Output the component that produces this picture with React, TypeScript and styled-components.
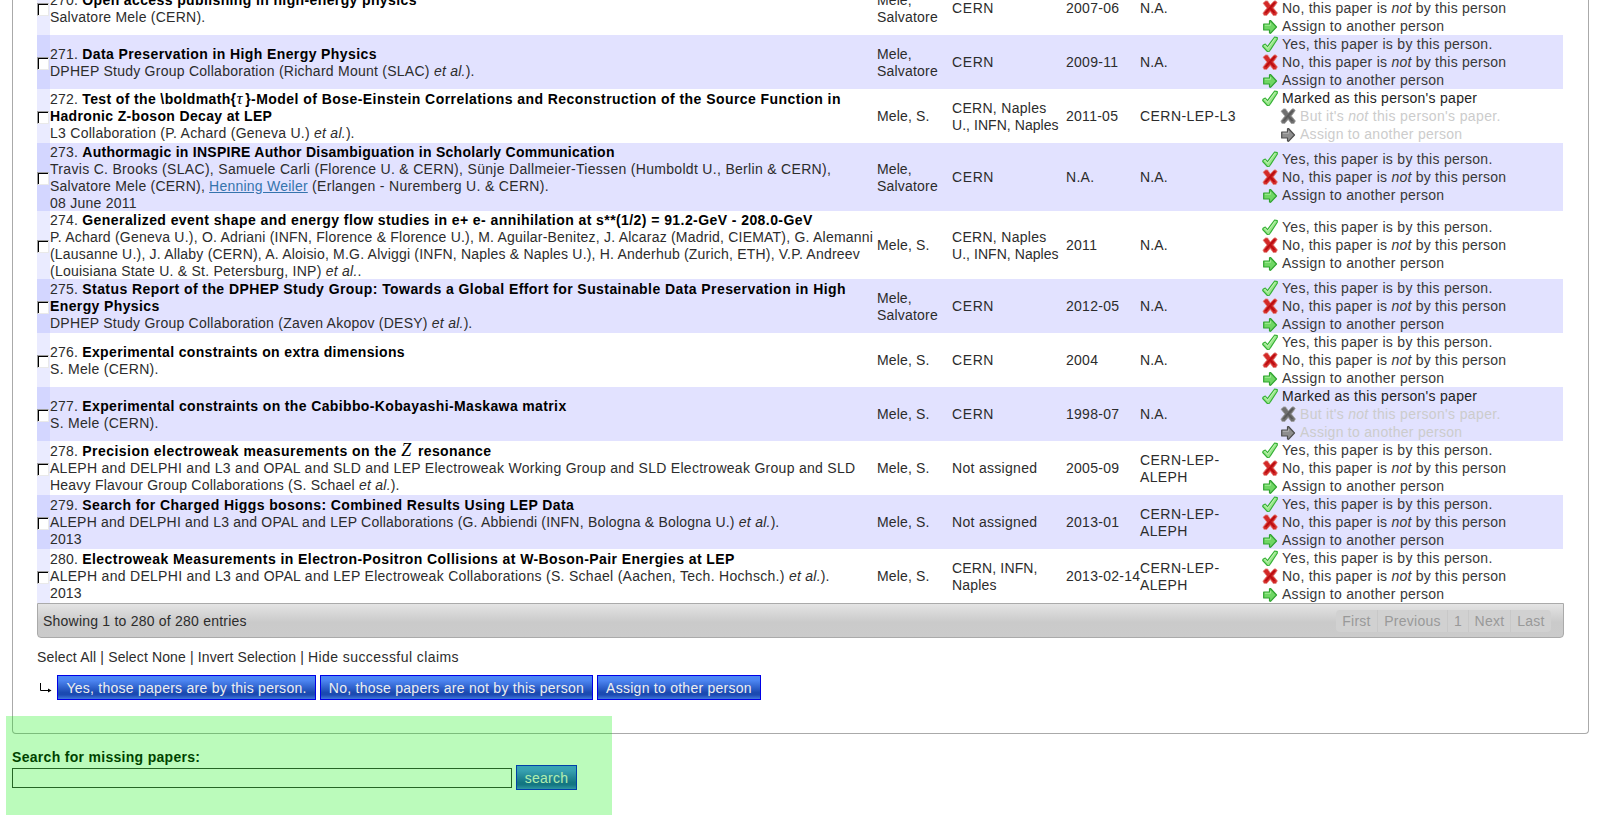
import React from 'react';
import styled, { createGlobalStyle, css } from 'styled-components';

const GlobalStyle = createGlobalStyle`
  html, body { margin: 0; padding: 0; background: #fff; overflow: hidden; }
  body { font: 14px/17px "Liberation Sans", Arial, sans-serif; color: #2c2c2c; }
  *, *::before, *::after { box-sizing: border-box; }
`;

const Page = styled.main`
  position: relative;
  width: 1601px;
  height: 836px;
  overflow: hidden;
`;

const Panel = styled.section`
  width: 1577px;
  height: 753px;
  margin: -19px 0 0 12px;
  padding: 0 24px;
  border: 1px solid #aaa;
  border-top: 0;
  border-radius: 0 0 4px 4px;
`;

const Row = styled.div<{ $shaded: boolean; $height: number }>`
  display: grid;
  grid-template-columns: 13px 827px 75px 114px 74px 122px 1fr;
  grid-template-rows: 100%;
  width: 1526px;
  height: ${p => p.$height}px;
  background: ${p => (p.$shaded ? '#e2e2ff' : '#fff')};
`;

const CheckCell = styled.div<{ $shaded: boolean }>`
  display: flex;
  align-items: center;
  padding-top: 2px;
  background: ${p => (p.$shaded ? '#d3d6ff' : '#eaebff')};
`;

const Checkbox = styled.span`
  width: 12px;
  height: 13px;
  background: #fff;
  border: 1px solid;
  border-color: #9c9c9c #e9e9e9 #e9e9e9 #9c9c9c;
  box-shadow: inset 1px 1px 0 #000;
`;

const Cell = styled.div`
  display: flex;
  flex-direction: column;
  justify-content: center;
  padding-top: 1px;
  white-space: pre;
`;

const Line = styled.div`
  flex: none;
  height: 17px;
`;

const Txt = styled.span<{ $ls?: number }>`
  letter-spacing: ${p => p.$ls ?? 0}px;
`;

const Num = styled(Txt)`
  display: inline-block;
  width: 32.3px;
`;

const Title = styled(Txt)`
  font-weight: bold;
  color: #000;
`;

const AuthorLink = styled(Txt)`
  color: #3574ad;
  text-decoration: underline;
`;

const Em = styled.i`
  letter-spacing: 0.25px;
`;

const MathGlyph = styled.span<{ $size: number; $width: number }>`
  display: inline-block;
  width: ${p => p.$width}px;
  font: italic ${p => p.$size}px/14px "Liberation Serif", serif;
  color: #000;
`;

const Actions = styled.div`
  display: flex;
  flex-direction: column;
  justify-content: center;
`;

const Action = styled.div<{ $muted?: boolean; $strong?: boolean }>`
  display: flex;
  align-items: center;
  gap: 4px;
  height: 18px;
  line-height: 18px;
  white-space: pre;
  color: ${p => (p.$muted ? '#ccc' : p.$strong ? '#222' : '#383838')};
  ${p => p.$muted && css`padding-left: 18px;`}
`;

const Icon = styled.svg`
  flex: none;
  width: 16px;
  height: 16px;
`;

const CheckIcon = () => (
  <Icon viewBox="0 0 16 16">
    <path d="M1 9.200L3.300 8l2.200 2.600L12.600 1l2.700.6v1.600L7.400 15.300l-2 .2L.7 10.500z" fill="#98e68a" stroke="#35b035" strokeWidth="1.1" strokeLinejoin="round" />
    <path d="M2.300 9.800l.9-.4 2.300 2.900 7.600-10" fill="none" stroke="#c4f6b8" strokeWidth=".9" />
  </Icon>
);

const CrossIcon = ({ muted }: { muted?: boolean }) => (
  <Icon viewBox="0 0 16 16">
    <path
      d="M1 3.200L3.600.9h2l2.700 4L12 .9h2l1.200 1.800-3.800 5.200 4 5-1.300 2.500-2.700.3-3.200-4.300-3.400 4.100-2.900-.2-1-2.200 4-5z"
      fill={muted ? '#707070' : '#d42a28'}
      stroke={muted ? '#a2a2a2' : '#e58b86'}
      strokeWidth=".8"
      strokeLinejoin="round"
    />
    <path d="M3.500 13L8 7.800 13 2.600M8 7.800L12.500 13" fill="none" stroke={muted ? '#595959' : '#b80d12'} strokeWidth="1.7" />
  </Icon>
);

const ArrowIcon = ({ muted }: { muted?: boolean }) => (
  <Icon viewBox="0 0 16 16">
    <path
      d="M1.700 6h5.800V2.800l1-.3L14.500 9l-6 6.300-1-.4V12H1.700z"
      fill={muted ? '#8e8e8e' : '#6fd664'}
      stroke={muted ? '#4e4e4e' : '#2fa32f'}
      strokeWidth="1.2"
      strokeLinejoin="round"
    />
    <path d="M2.800 7.300h5.800V5" fill="none" stroke={muted ? '#b5b5b5' : '#a8ee9a'} strokeWidth=".9" />
  </Icon>
);

const PendingActions = () => (
  <Actions>
    <Action><CheckIcon /><Txt $ls={0.28}>Yes, this paper is by this person.</Txt></Action>
    <Action><CrossIcon /><span><Txt $ls={0.24}>No, this paper is </Txt><Em>not</Em><Txt $ls={0.24}> by this person</Txt></span></Action>
    <Action><ArrowIcon /><Txt $ls={0.28}>Assign to another person</Txt></Action>
  </Actions>
);

const ClaimedActions = () => (
  <Actions>
    <Action $strong><CheckIcon /><Txt $ls={0.28}>Marked as this person's paper</Txt></Action>
    <Action $muted><CrossIcon muted /><span><Txt $ls={0.3}>But it's </Txt><Em>not</Em><Txt $ls={0.36}> this person's paper.</Txt></span></Action>
    <Action $muted><ArrowIcon muted /><Txt $ls={0.28}>Assign to another person</Txt></Action>
  </Actions>
);

type Fragment = [string, number];
const Lines = ({ items }: { items: Fragment[] }) => (
  <Cell>
    {items.map(([text, spacing], i) => (
      <Line key={i}><Txt $ls={spacing}>{text}</Txt></Line>
    ))}
  </Cell>
);

const SALVATORE: Fragment[] = [['Mele,', 0.1], ['Salvatore', 0.2]];
const MELE_S: Fragment[] = [['Mele, S.', 0.15]];
const CERN: Fragment[] = [['CERN', 0.6]];
const NAPLES: Fragment[] = [['CERN, Naples', 0.3], ['U., INFN, Naples', 0.05]];
const UNASSIGNED: Fragment[] = [['Not assigned', 0.3]];
const NA: Fragment[] = [['N.A.', 0.1]];
const ALEPH: Fragment[] = [['CERN-LEP-', 0.45], ['ALEPH', 0.35]];

interface Paper {
  id: number;
  lines: React.ReactNode[];
  name: Fragment[];
  affiliation: Fragment[];
  date: string;
  experiment: Fragment[];
  claimed?: boolean;
  height?: number;
}

const EtAl = ({ end = ').' }: { end?: string }) => (<><Em>et al.</Em>{end}</>);

const papers: Paper[] = [
  {
    id: 270,
    lines: [<Title $ls={0.38}>Open access publishing in high-energy physics</Title>, <Txt $ls={0.24}>Salvatore Mele (CERN).</Txt>],
    name: SALVATORE, affiliation: CERN, date: '2007-06', experiment: NA,
  },
  {
    id: 271,
    lines: [
      <Title $ls={0.4}>Data Preservation in High Energy Physics</Title>,
      <><Txt $ls={0.255}>DPHEP Study Group Collaboration (Richard Mount (SLAC) </Txt><EtAl /></>,
    ],
    name: SALVATORE, affiliation: CERN, date: '2009-11', experiment: NA,
  },
  {
    id: 272,
    lines: [
      <><Title $ls={0.37}>{'Test of the \\boldmath{'}</Title><MathGlyph $size={17} $width={8.8}>τ</MathGlyph><Title $ls={0.445}>{'}-Model of Bose-Einstein Correlations and Reconstruction of the Source Function in'}</Title></>,
      <Title $ls={0.34}>Hadronic Z-boson Decay at LEP</Title>,
      <><Txt $ls={0.265}>L3 Collaboration (P. Achard (Geneva U.) </Txt><EtAl /></>,
    ],
    name: MELE_S, affiliation: NAPLES, date: '2011-05', experiment: [['CERN-LEP-L3', 0.45]], claimed: true,
  },
  {
    id: 273,
    height: 68,
    lines: [
      <Title $ls={0.265}>Authormagic in INSPIRE Author Disambiguation in Scholarly Communication</Title>,
      <Txt $ls={0.31}>Travis C. Brooks (SLAC), Samuele Carli (Florence U. &amp; CERN), Sünje Dallmeier-Tiessen (Humboldt U., Berlin &amp; CERN),</Txt>,
      <><Txt $ls={0.22}>Salvatore Mele (CERN), </Txt><AuthorLink $ls={0.23}>Henning Weiler</AuthorLink><Txt $ls={0.32}> (Erlangen - Nuremberg U. &amp; CERN).</Txt></>,
      <Txt $ls={0.25}>08 June 2011</Txt>,
    ],
    name: SALVATORE, affiliation: CERN, date: 'N.A.', experiment: NA,
  },
  {
    id: 274,
    height: 68,
    lines: [
      <Title $ls={0.425}>Generalized event shape and energy flow studies in e+ e- annihilation at s**(1/2) = 91.2-GeV - 208.0-GeV</Title>,
      <Txt $ls={0.22}>P. Achard (Geneva U.), O. Adriani (INFN, Florence &amp; Florence U.), M. Aguilar-Benitez, J. Alcaraz (Madrid, CIEMAT), G. Alemanni</Txt>,
      <Txt $ls={0.205}>(Lausanne U.), J. Allaby (CERN), A. Aloisio, M.G. Alviggi (INFN, Naples &amp; Naples U.), H. Anderhub (Zurich, ETH), V.P. Andreev</Txt>,
      <><Txt $ls={0.24}>(Louisiana State U. &amp; St. Petersburg, INP) </Txt><EtAl end="." /></>,
    ],
    name: MELE_S, affiliation: NAPLES, date: '2011', experiment: NA,
  },
  {
    id: 275,
    lines: [
      <Title $ls={0.425}>Status Report of the DPHEP Study Group: Towards a Global Effort for Sustainable Data Preservation in High</Title>,
      <Title $ls={0.38}>Energy Physics</Title>,
      <><Txt $ls={0.235}>DPHEP Study Group Collaboration (Zaven Akopov (DESY) </Txt><EtAl /></>,
    ],
    name: SALVATORE, affiliation: CERN, date: '2012-05', experiment: NA,
  },
  {
    id: 276,
    lines: [<Title $ls={0.35}>Experimental constraints on extra dimensions</Title>, <Txt $ls={0.3}>S. Mele (CERN).</Txt>],
    name: MELE_S, affiliation: CERN, date: '2004', experiment: NA,
  },
  {
    id: 277,
    lines: [<Title $ls={0.37}>Experimental constraints on the Cabibbo-Kobayashi-Maskawa matrix</Title>, <Txt $ls={0.3}>S. Mele (CERN).</Txt>],
    name: MELE_S, affiliation: CERN, date: '1998-07', experiment: NA, claimed: true,
  },
  {
    id: 278,
    lines: [
      <><Title $ls={0.46}>Precision electroweak measurements on the </Title><MathGlyph $size={18} $width={12.5}>Z</MathGlyph><Title $ls={0.38}> resonance</Title></>,
      <Txt $ls={0.285}>ALEPH and DELPHI and L3 and OPAL and SLD and LEP Electroweak Working Group and SLD Electroweak Group and SLD</Txt>,
      <><Txt $ls={0.22}>Heavy Flavour Group Collaborations (S. Schael </Txt><EtAl /></>,
    ],
    name: MELE_S, affiliation: UNASSIGNED, date: '2005-09', experiment: ALEPH,
  },
  {
    id: 279,
    lines: [
      <Title $ls={0.41}>Search for Charged Higgs bosons: Combined Results Using LEP Data</Title>,
      <><Txt $ls={0.21}>ALEPH and DELPHI and L3 and OPAL and LEP Collaborations (G. Abbiendi (INFN, Bologna &amp; Bologna U.) </Txt><EtAl /></>,
      <Txt $ls={0.1}>2013</Txt>,
    ],
    name: MELE_S, affiliation: UNASSIGNED, date: '2013-01', experiment: ALEPH,
  },
  {
    id: 280,
    lines: [
      <Title $ls={0.425}>Electroweak Measurements in Electron-Positron Collisions at W-Boson-Pair Energies at LEP</Title>,
      <><Txt $ls={0.293}>ALEPH and DELPHI and L3 and OPAL and LEP Electroweak Collaborations (S. Schael (Aachen, Tech. Hochsch.) </Txt><EtAl /></>,
      <Txt $ls={0.1}>2013</Txt>,
    ],
    name: MELE_S, affiliation: [['CERN, INFN,', 0.15], ['Naples', 0.2]], date: '2013-02-14', experiment: ALEPH,
  },
];

const Footer = styled.div`
  display: flex;
  align-items: center;
  justify-content: space-between;
  width: 1527px;
  height: 35px;
  padding: 1px 12px 0 5px;
  border: 1px solid #aaa;
  border-radius: 0 0 4px 4px;
  background: linear-gradient(#e4e4e4, #cacaca 55%, #cbcbcb);
`;

const Pager = styled.div`
  display: flex;
  height: 22px;
  margin-top: -1px;
  border-radius: 4px;
  overflow: hidden;
  background: #d1d1d1;
  color: #999;
`;

const PageButton = styled.span<{ $width: number }>`
  width: ${p => p.$width}px;
  padding-top: 3px;
  text-align: center;
  letter-spacing: 0.25px;
  border-right: 1px solid #c8c8c8;
  &:last-child { border-right: 0; }
`;

const SelectLinks = styled.div`
  margin-top: 11px;
  height: 17px;
  white-space: pre;
`;

const BulkBar = styled.div`
  display: flex;
  align-items: center;
  gap: 4px;
  height: 25px;
  margin-top: 9px;
`;

const ElbowArrow = styled.svg`
  width: 15px;
  height: 16px;
  margin-right: 1px;
`;

const Button = styled.button<{ $width: number }>`
  width: ${p => p.$width}px;
  height: 25px;
  padding: 1px 0 0;
  border: 1px solid #0000e6;
  background: linear-gradient(#4c88f5, #4c84f0 20%, #1b4ab2 72%, #1b4ab2 82%, #4078dc);
  color: #eee;
  font: inherit;
  letter-spacing: 0.26px;
  white-space: nowrap;
`;

const MissingSearch = styled.form`
  padding: 15px 0 0 12px;
`;

const SearchLabel = styled.label`
  display: block;
  height: 16px;
  font-weight: bold;
  color: #000;
`;

const SearchRow = styled.div`
  display: flex;
  align-items: center;
  gap: 4px;
`;

const SearchInput = styled.input`
  width: 500px;
  height: 20px;
  margin: 0;
  padding: 0 2px;
  border: 1px solid #333;
  background: #fff;
  font: inherit;
`;

const Highlight = styled.div`
  position: absolute;
  left: 6px;
  top: 716px;
  width: 606px;
  height: 99px;
  background: rgba(0, 240, 0, 0.265);
  pointer-events: none;
`;

export default function App() {
  return (
    <Page>
      <GlobalStyle />
      <Panel>
        {papers.map((p, index) => {
          const shaded = index % 2 === 1;
          return (
            <Row key={p.id} $shaded={shaded} $height={p.height ?? 54}>
              <CheckCell $shaded={shaded}><Checkbox /></CheckCell>
              <Cell>
                {p.lines.map((line, i) => (
                  <Line key={i}>
                    {i === 0 && <Num $ls={0.2}>{p.id}. </Num>}
                    {line}
                  </Line>
                ))}
              </Cell>
              <Lines items={p.name} />
              <Lines items={p.affiliation} />
              <Lines items={[[p.date, 0.27]]} />
              <Lines items={p.experiment} />
              {p.claimed ? <ClaimedActions /> : <PendingActions />}
            </Row>
          );
        })}
        <Footer>
          <Txt $ls={0.22}>Showing 1 to 280 of 280 entries</Txt>
          <Pager>
            <PageButton $width={42}>First</PageButton>
            <PageButton $width={70}>Previous</PageButton>
            <PageButton $width={21}>1</PageButton>
            <PageButton $width={42}>Next</PageButton>
            <PageButton $width={40}>Last</PageButton>
          </Pager>
        </Footer>
        <SelectLinks>
          <Txt $ls={0.17}>Select All | </Txt>
          <Txt $ls={0.13}>Select None | </Txt>
          <Txt $ls={0.12}>Invert Selection | </Txt>
          <Txt $ls={0.43}>Hide successful claims</Txt>
        </SelectLinks>
        <BulkBar>
          <ElbowArrow viewBox="0 0 15 16">
            <path d="M3.500 3v7.500h8" fill="none" stroke="#000" />
            <path d="M11 8.500l3.500 2-3.500 2z" fill="#000" />
          </ElbowArrow>
          <Button $width={259}>Yes, those papers are by this person.</Button>
          <Button $width={273}>No, those papers are not by this person</Button>
          <Button $width={164}>Assign to other person</Button>
        </BulkBar>
      </Panel>
      <MissingSearch onSubmit={e => e.preventDefault()}>
        <SearchLabel htmlFor="missing"><Txt $ls={0.3}>Search for missing papers:</Txt></SearchLabel>
        <SearchRow>
          <SearchInput id="missing" />
          <Button $width={61}>search</Button>
        </SearchRow>
      </MissingSearch>
      <Highlight />
    </Page>
  );
}
